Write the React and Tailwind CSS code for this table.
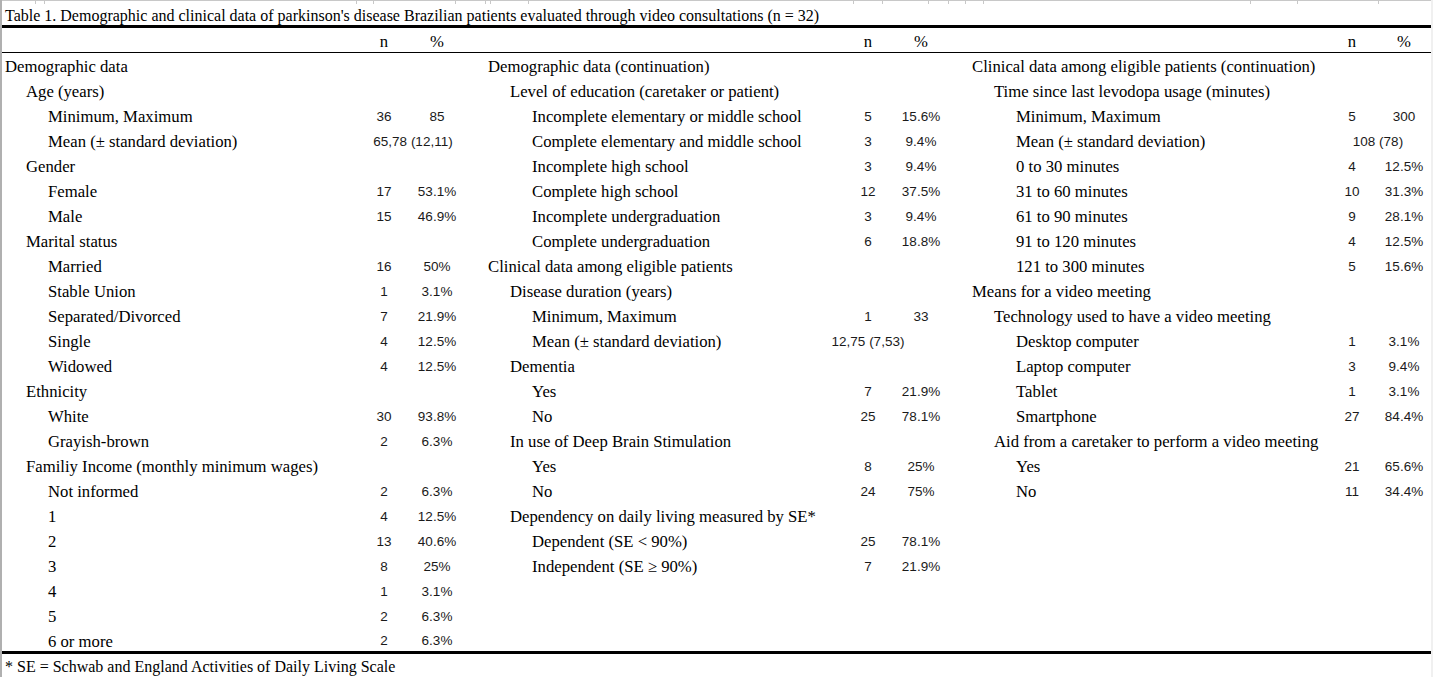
import React from "react";

const colA = [
  [0, "Demographic data"],
  [1, "Age (years)"],
  [2, "Minimum, Maximum", "36", "85"],
  [2, "Mean (± standard deviation)", "65,78 (12,11)", null, "merge"],
  [1, "Gender"],
  [2, "Female", "17", "53.1%"],
  [2, "Male", "15", "46.9%"],
  [1, "Marital status"],
  [2, "Married", "16", "50%"],
  [2, "Stable Union", "1", "3.1%"],
  [2, "Separated/Divorced", "7", "21.9%"],
  [2, "Single", "4", "12.5%"],
  [2, "Widowed", "4", "12.5%"],
  [1, "Ethnicity"],
  [2, "White", "30", "93.8%"],
  [2, "Grayish-brown", "2", "6.3%"],
  [1, "Familiy Income (monthly minimum wages)"],
  [2, "Not informed", "2", "6.3%"],
  [2, "1", "4", "12.5%"],
  [2, "2", "13", "40.6%"],
  [2, "3", "8", "25%"],
  [2, "4", "1", "3.1%"],
  [2, "5", "2", "6.3%"],
  [2, "6 or more", "2", "6.3%"],
];

const colB = [
  [0, "Demographic data (continuation)"],
  [1, "Level of education (caretaker or patient)"],
  [2, "Incomplete elementary or middle school", "5", "15.6%"],
  [2, "Complete elementary and middle school", "3", "9.4%"],
  [2, "Incomplete high school", "3", "9.4%"],
  [2, "Complete high school", "12", "37.5%"],
  [2, "Incomplete undergraduation", "3", "9.4%"],
  [2, "Complete undergraduation", "6", "18.8%"],
  [0, "Clinical data among eligible patients"],
  [1, "Disease duration (years)"],
  [2, "Minimum, Maximum", "1", "33"],
  [2, "Mean (± standard deviation)", "12,75 (7,53)", null],
  [1, "Dementia"],
  [2, "Yes", "7", "21.9%"],
  [2, "No", "25", "78.1%"],
  [1, "In use of Deep Brain Stimulation"],
  [2, "Yes", "8", "25%"],
  [2, "No", "24", "75%"],
  [1, "Dependency on daily living measured by SE*"],
  [2, "Dependent (SE < 90%)", "25", "78.1%"],
  [2, "Independent (SE ≥ 90%)", "7", "21.9%"],
];

const colC = [
  [0, "Clinical data among eligible patients (continuation)"],
  [1, "Time since last levodopa usage (minutes)"],
  [2, "Minimum, Maximum", "5", "300"],
  [2, "Mean (± standard deviation)", "108 (78)", null, "merge"],
  [2, "0 to 30 minutes", "4", "12.5%"],
  [2, "31 to 60 minutes", "10", "31.3%"],
  [2, "61 to 90 minutes", "9", "28.1%"],
  [2, "91 to 120 minutes", "4", "12.5%"],
  [2, "121 to 300 minutes", "5", "15.6%"],
  [0, "Means for a video meeting"],
  [1, "Technology used to have a video meeting"],
  [2, "Desktop computer", "1", "3.1%"],
  [2, "Laptop computer", "3", "9.4%"],
  [2, "Tablet", "1", "3.1%"],
  [2, "Smartphone", "27", "84.4%"],
  [1, "Aid from a caretaker to perform a video meeting"],
  [2, "Yes", "21", "65.6%"],
  [2, "No", "11", "34.4%"],
];

const ticks = [35, 44, 356, 373, 455, 485, 490, 528, 853, 882, 928, 948, 965, 983, 1250, 1297, 1378];

const indentA = ["pl-[3px]", "pl-[24px]", "pl-[46px]"];
const indent = ["pl-[4px]", "pl-[26px]", "pl-[48px]"];

const num = "flex justify-center whitespace-nowrap font-['Liberation_Sans',sans-serif] text-[13.5px] text-[#1a1a1a]";

function Block({ rows, lw, nw, pw, first }) {
  const filled = [...rows];
  while (filled.length < 24) filled.push(null);
  const ind = first ? indentA : indent;
  return (
    <div className="flex flex-col">
      {filled.map((r, i) => (
        <div key={i} className={`flex items-center ${i === 23 ? "h-[23px] pt-[4px]" : "h-[25px] pt-[3px]"}`}>
          <div
            className={`${r ? ind[r[0]] : ""} whitespace-nowrap font-['Liberation_Serif',serif] text-[16.7px]`}
            style={{ width: lw }}
          >
            {r ? r[1] : ""}
          </div>
          {r && r[4] === "merge" ? (
            <div className={num} style={{ width: nw + pw }}>
              {r[2]}
            </div>
          ) : (
            <>
              <div className={num} style={{ width: nw }}>
                {r ? r[2] : ""}
              </div>
              <div className={num} style={{ width: pw }}>
                {r ? r[3] : ""}
              </div>
            </>
          )}
        </div>
      ))}
    </div>
  );
}

function Head({ lw, nw, pw }) {
  return (
    <div className="flex h-[24px] items-center pt-[3px] font-['Liberation_Serif',serif] text-[16.7px]">
      <div style={{ width: lw }} />
      <div className="text-center" style={{ width: nw }}>n</div>
      <div className="text-center" style={{ width: pw }}>%</div>
    </div>
  );
}

export default function App() {
  return (
    <div className="flex h-[677px] w-[1433px] bg-white text-black">
      <div className="flex w-[1431px] flex-col border-l-2 border-[#b0b0b0]">
        <div className="relative h-[3px] w-[1429px] border-t border-[#c8c8c8]">
          {ticks.map((x) => (
            <div key={x} className="absolute top-0 h-[3px] w-px bg-[#c8c8c8]" style={{ left: x - 2 }} />
          ))}
        </div>
        <div className="flex h-[22px] w-[1429px] items-center pl-[3px] pt-[3px] font-['Liberation_Serif',serif] text-[16px] whitespace-nowrap">
          Table 1. Demographic and clinical data of parkinson's disease Brazilian patients evaluated through video consultations (n = 32)
        </div>
        <div className="flex w-[1429px] border-t-[3px] border-b border-black">
          <Head lw={358} nw={48} pw={58} />
          <div className="w-[18px]" />
          <Head lw={358} nw={52} pw={54} />
          <div className="w-[20px]" />
          <Head lw={358} nw={52} pw={52} />
        </div>
        <div className="flex w-[1429px] border-b-[3px] border-black">
          <Block rows={colA} lw={358} nw={48} pw={58} first />
          <div className="w-[18px]" />
          <Block rows={colB} lw={358} nw={52} pw={54} />
          <div className="w-[20px]" />
          <Block rows={colC} lw={358} nw={52} pw={52} />
        </div>
        <div className="flex h-[23px] items-center pl-[3px] pt-[2px] font-['Liberation_Serif',serif] text-[16px]">
          * SE = Schwab and England Activities of Daily Living Scale
        </div>
      </div>
      <div className="w-[2px] bg-[#f0f0f0]" />
    </div>
  );
}
